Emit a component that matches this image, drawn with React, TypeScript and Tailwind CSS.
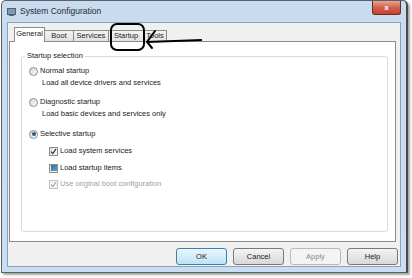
import React from 'react';

const Radio: React.FC<{ checked?: boolean }> = ({ checked }) => (
  <span className="w-[9px] h-[9px] rounded-full border border-[#8c8c8c] bg-linear-to-br from-[#d6d6d6] to-[#fafafa] flex items-center justify-center shrink-0">
    {checked && <span className="w-[4px] h-[4px] rounded-full bg-[#2b5d86]" />}
  </span>
);

const Check: React.FC<{ state: 'on' | 'mixed' | 'off'; disabled?: boolean }> = ({ state, disabled }) => (
  <span
    className={
      'w-[9px] h-[9px] border flex items-center justify-center shrink-0 ' +
      (disabled ? 'border-[#c4c4c4] bg-[#f4f4f4]' : 'border-[#8c8c8c] bg-linear-to-br from-[#dedede] to-[#fbfbfb]')
    }
  >
    {state === 'on' && (
      <svg width="7" height="7" viewBox="0 0 7 7">
        <path d="M1 3.6 L2.8 5.6 L6 1" fill="none" stroke={disabled ? '#a8a8a8' : '#2c2c2c'} strokeWidth="1.2" />
      </svg>
    )}
    {state === 'mixed' && <span className="w-[6px] h-[6px] bg-linear-to-br from-[#2f6f96] to-[#5ea6c9]" />}
  </span>
);

const Button: React.FC<{ label: string; kind?: 'default' | 'normal' | 'disabled' }> = ({ label, kind = 'normal' }) => {
  const styles = {
    default: 'border-[#3d7fb0] bg-linear-to-b from-[#eaf6fd] to-[#bfe3f5] text-[#1a1a1a]',
    normal: 'border-[#7a7a7a] bg-linear-to-b from-[#f4f4f4] to-[#d8d8d8] text-[#1a1a1a]',
    disabled: 'border-[#b5b9bc] bg-[#f4f4f4] text-[#8a8a8a]',
  };
  return (
    <div className={'w-[51px] h-[17px] border rounded-[3px] flex items-center justify-center ' + styles[kind]}>{label}</div>
  );
};

const tabs = [
  { label: 'General', w: 'w-[31px]' },
  { label: 'Boot', w: 'w-[29px]' },
  { label: 'Services', w: 'w-[35px]' },
  { label: 'Startup', w: 'w-[35px]' },
  { label: 'Tools', w: 'w-[23px]' },
];

export default function App() {
  return (
    <div className="relative w-[412px] h-[278px] bg-white font-['Liberation_Sans',Arial,sans-serif] text-[7.5px] leading-none text-[#222]">
      {/* window */}
      <div className="ml-px w-[407px] h-[273px] border border-[#5a6068] border-r-2 border-r-[#4a4a4a] rounded-t-[5px] bg-linear-to-b from-[#c8dbef] to-[#cbdef1] flex flex-col px-[5px] pb-[5px] shadow-[2px_2px_2px_rgba(0,0,0,0.35)]">
        {/* title bar */}
        <div className="h-[21px] flex items-start shrink-0">
          <div className="flex items-center h-full gap-[4px]">
            <svg width="9" height="8" viewBox="0 0 9 8">
              <rect x="0.5" y="0.5" width="8" height="6" fill="#8e9aa6" stroke="#55606b" />
              <rect x="1.5" y="1.5" width="6" height="4" fill="#6b9fd0" />
              <rect x="2" y="7" width="5" height="1" fill="#55606b" />
            </svg>
            <span className="text-[8.5px] text-[#1d2a38]">System Configuration</span>
          </div>
          <div className="ml-auto w-[29px] h-[14px] border border-t-0 border-[#6d2b22] rounded-b-[3px] bg-linear-to-b from-[#e9a395] via-[#d2604d] to-[#c6412c] flex items-center justify-center">
            <span className="text-white text-[8px] font-bold">x</span>
          </div>
        </div>

        {/* client area */}
        <div className="flex-1 bg-[#f0f0f0] border border-[#8ba2bb] flex flex-col">
          {/* tab strip */}
          <div className="mt-[4px] h-[14px] pl-[6px] flex items-end">
            {tabs.map((t, i) =>
              i === 0 ? (
                <div key={t.label} className={t.w + ' h-[15px] -mb-px z-10 bg-white border border-b-0 border-[#898c95] flex items-center justify-center pb-[2px]'}>
                  {t.label}
                </div>
              ) : (
                <div key={t.label} className={t.w + ' h-[11px] bg-linear-to-b from-[#f3f3f3] to-[#e2e2e2] border border-l-0 border-b-0 border-[#898c95] flex items-center justify-center'}>
                  {t.label}
                </div>
              )
            )}
          </div>

          {/* tab panel */}
          <div className="ml-px mr-[4px] h-[201px] bg-white border border-[#898c95] flex flex-col">
            <fieldset className="mt-[9px] ml-[11px] mr-[7px] mb-[9px] flex-1 border border-[#d8dcdf] rounded-[3px]">
              <legend className="ml-[3px] px-[2px] leading-[10px]">Startup selection</legend>
              <div className="flex flex-col pl-[7px]">
                <div className="mt-[5px] h-[10px] flex items-center gap-[2px]">
                  <Radio />
                  <span>Normal startup</span>
                </div>
                <div className="mt-[2px] h-[10px] flex items-center pl-[13px]">Load all device drivers and services</div>
                <div className="mt-[9px] h-[10px] flex items-center gap-[2px]">
                  <Radio />
                  <span>Diagnostic startup</span>
                </div>
                <div className="mt-[2px] h-[10px] flex items-center pl-[13px]">Load basic devices and services only</div>
                <div className="mt-[10px] h-[10px] flex items-center gap-[2px]">
                  <Radio checked />
                  <span>Selective startup</span>
                </div>
                <div className="mt-[7px] h-[10px] flex items-center gap-[2px] pl-[20px]">
                  <Check state="on" />
                  <span>Load system services</span>
                </div>
                <div className="mt-[7px] h-[10px] flex items-center gap-[2px] pl-[20px]">
                  <Check state="mixed" />
                  <span>Load startup items</span>
                </div>
                <div className="mt-[6px] h-[10px] flex items-center gap-[2px] pl-[20px] text-[#a0a0a0]">
                  <Check state="on" disabled />
                  <span>Use original boot configuration</span>
                </div>
              </div>
            </fieldset>
          </div>

          {/* buttons */}
          <div className="mt-[6px] pr-[2px] flex justify-end gap-[6px]">
            <Button label="OK" kind="default" />
            <Button label="Cancel" />
            <Button label="Apply" kind="disabled" />
            <Button label="Help" />
          </div>
        </div>
      </div>

      {/* hand-drawn annotation */}
      <div className="absolute left-[110px] top-[23px] w-[35px] h-[28px] border-2 border-black rounded-[7px] pointer-events-none" />
      <svg className="absolute left-0 top-0 pointer-events-none" width="412" height="278">
        <path d="M147 42 L202 40" stroke="#000" strokeWidth="2" fill="none" />
        <path d="M155 31 L147 42 L152 48" stroke="#000" strokeWidth="2" fill="none" strokeLinecap="round" />
      </svg>
    </div>
  );
}
